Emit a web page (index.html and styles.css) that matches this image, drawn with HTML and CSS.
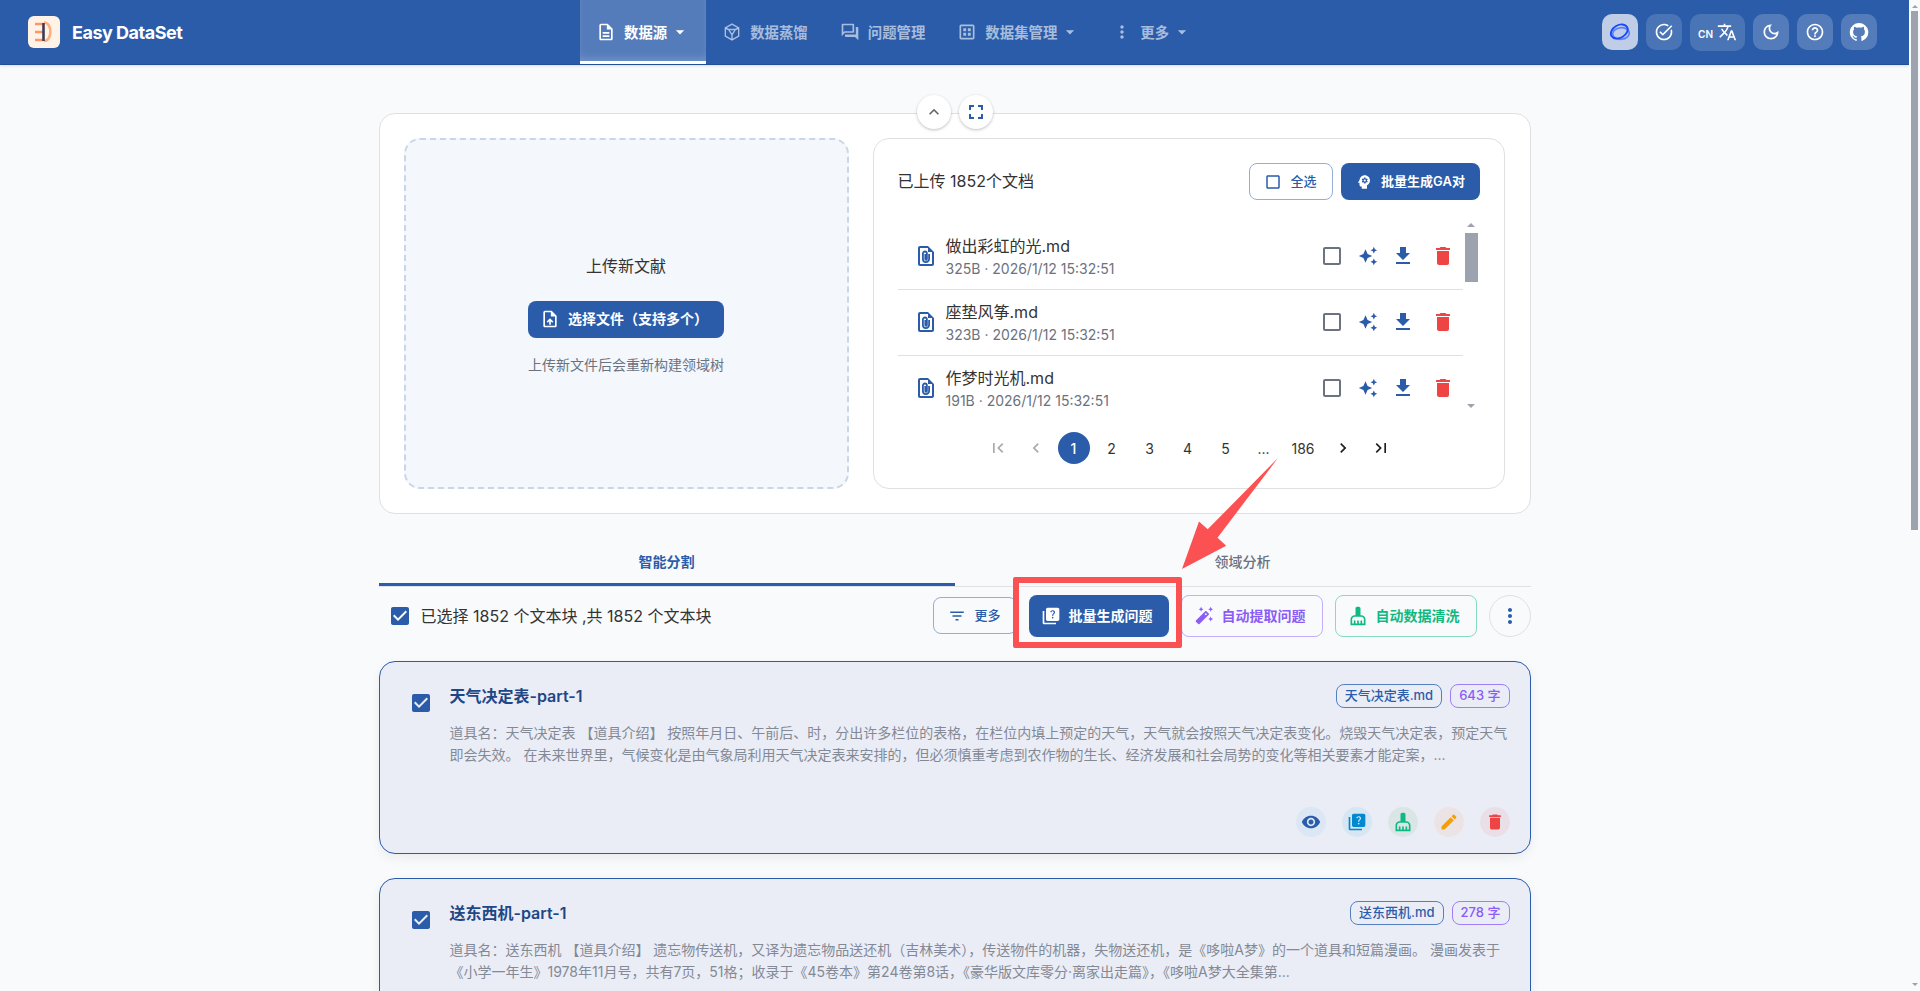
FILE: index.html
```html
<!DOCTYPE html>
<html lang="zh-CN">
<head>
    <meta charset="UTF-8">
    <meta name="viewport" content="width=device-width, initial-scale=1.0">
    <title>Easy DataSet</title>
    <link rel="stylesheet" href="styles.css">
</head>
<body>
    <!-- shared icons -->
    <svg class="sprite" aria-hidden="true">
        <symbol id="i-caret" viewBox="0 0 24 24"><path d="m7 10 5 5 5-5z"/></symbol>
        <symbol id="i-box" viewBox="0 0 24 24"><path d="M19 5v14H5V5h14m0-2H5c-1.1 0-2 .9-2 2v14c0 1.1.9 2 2 2h14c1.1 0 2-.9 2-2V5c0-1.1-.9-2-2-2z"/></symbol>
        <symbol id="i-checked" viewBox="0 0 24 24"><path d="M19 3H5c-1.11 0-2 .9-2 2v14c0 1.1.89 2 2 2h14c1.11 0 2-.9 2-2V5c0-1.1-.89-2-2-2zm-9 14l-5-5 1.41-1.41L10 14.17l7.59-7.59L19 8l-9 9z"/></symbol>
        <symbol id="i-file" viewBox="0 0 24 24"><path fill-rule="evenodd" d="M14 2H6c-1.1 0-2 .9-2 2v16c0 1.1.9 2 2 2h12c1.1 0 2-.9 2-2V8l-6-6zM6 4h8v4h4v12H6z"/><path fill="none" stroke="currentColor" stroke-width="1.8" d="M15.100 10v5a3.100 3.100 0 0 1-6.200 0V9.500a2 2 0 0 1 4 0v5.500a.8.8 0 0 1-1.600 0V10"/></symbol>
        <symbol id="i-stars" viewBox="0 0 24 24"><path d="m19 9 1.250-2.750L23 5l-2.750-1.250L19 1l-1.250 2.750L15 5l2.750 1.250L19 9zm-7.500.5L9 4 6.500 9.500 1 12l5.500 2.500L9 20l2.500-5.500L17 12l-5.500-2.500zM19 15l-1.250 2.750L15 19l2.750 1.250L19 23l1.250-2.750L23 19l-2.750-1.250L19 15z"/></symbol>
        <symbol id="i-download" viewBox="0 0 24 24"><path d="M19 9h-4V3H9v6H5l7 7 7-7zM5 18v2h14v-2H5z"/></symbol>
        <symbol id="i-trash" viewBox="0 0 24 24"><path d="M6 19c0 1.100.9 2 2 2h8c1.100 0 2-.9 2-2V7H6v12zM19 4h-3.500l-1-1h-5l-1 1H5v2h14V4z"/></symbol>
        <symbol id="i-quiz" viewBox="0 0 24 24"><path d="M4 6H2v14c0 1.100.9 2 2 2h14v-2H4V6z"/><path d="M20 2H8c-1.100 0-2 .9-2 2v12c0 1.100.9 2 2 2h12c1.100 0 2-.9 2-2V4c0-1.100-.9-2-2-2zm-5.990 13c-.59 0-1.050-.47-1.050-1.050 0-.59.47-1.040 1.050-1.040.59 0 1.040.45 1.040 1.040-.01.58-.45 1.050-1.040 1.050zm2.500-6.170c-.63.93-1.230 1.210-1.560 1.810-.13.24-.18.4-.18 1.180h-1.520c0-.41-.06-1.080.26-1.650.41-.73 1.180-1.160 1.630-1.800.48-.68.21-1.940-1.140-1.940-.88 0-1.320.67-1.500 1.230l-1.370-.57C11.510 5.960 12.520 5 13.990 5c1.230 0 2.080.56 2.510 1.260.37.6.58 1.730.01 2.570z"/></symbol>
        <symbol id="i-clean" viewBox="0 0 24 24"><path d="M16 11h-1V3c0-1.100-.9-2-2-2h-2c-1.100 0-2 .9-2 2v8H8c-2.760 0-5 2.240-5 5v7h18v-7c0-2.760-2.240-5-5-5zm3 10h-2v-3c0-.55-.45-1-1-1s-1 .45-1 1v3h-2v-3c0-.55-.45-1-1-1s-1 .45-1 1v3H9v-3c0-.55-.45-1-1-1s-1 .45-1 1v3H5v-5c0-1.650 1.350-3 3-3h8c1.650 0 3 1.350 3 3v5z"/></symbol>
        <symbol id="i-eye" viewBox="0 0 24 24"><path d="M12 4.500C7 4.500 2.730 7.610 1 12c1.730 4.390 6 7.500 11 7.500s9.270-3.110 11-7.500c-1.730-4.390-6-7.500-11-7.500zM12 17c-2.760 0-5-2.240-5-5s2.240-5 5-5 5 2.240 5 5-2.240 5-5 5zm0-8c-1.660 0-3 1.340-3 3s1.340 3 3 3 3-1.340 3-3-1.340-3-3-3z"/></symbol>
        <symbol id="i-edit" viewBox="0 0 24 24"><path d="M3 17.250V21h3.750L17.810 9.940l-3.750-3.750L3 17.250zM20.710 7.040c.39-.39.39-1.020 0-1.410l-2.340-2.340c-.39-.39-1.020-.39-1.410 0l-1.830 1.830 3.750 3.750 1.830-1.830z"/></symbol>
        <symbol id="i-dots" viewBox="0 0 24 24"><path d="M12 8c1.100 0 2-.9 2-2s-.9-2-2-2-2 .9-2 2 .9 2 2 2zm0 2c-1.100 0-2 .9-2 2s.9 2 2 2 2-.9 2-2-.9-2-2-2zm0 6c-1.100 0-2 .9-2 2s.9 2 2 2 2-.9 2-2-.9-2-2-2z"/></symbol>
    </svg>

    <div class="page">
        <header class="navbar">
            <div class="brand">
                <svg class="brand-logo" viewBox="0 0 32 32">
                    <rect width="32" height="32" rx="6" fill="#fff3e8"/>
                    <path d="M7 8h8M7 16h8M7 24h8" stroke="#ff9468" stroke-width="2.600" fill="none"/>
                    <path d="M16 6.500c8.500 0 8.500 18.500 0 18.500" stroke="#ffae7d" stroke-width="2.600" fill="none"/>
                    <path d="M15.500 7v18" stroke="#3d3b52" stroke-width="2.600"/>
                </svg>
                <span class="brand-name">Easy DataSet</span>
            </div>
            <nav class="nav">
                <a class="nav-item active">
                    <svg class="s20" viewBox="0 0 24 24"><path d="M8 16h8v2H8zm0-4h8v2H8zm6-10H6c-1.100 0-2 .9-2 2v16c0 1.100.89 2 1.990 2H18c1.100 0 2-.9 2-2V8l-6-6zm4 18H6V4h7v5h5v11z"/></svg>
                    <span>数据源</span><svg class="s20 caret"><use href="#i-caret"/></svg>
                </a>
                <a class="nav-item">
                    <svg class="s20 line" viewBox="0 0 24 24"><path d="M12 2.500 20 7v10l-8 4.500L4 17V7z"/><path d="M8 9h8l-4 6.500zM4.500 7.500 8 9m8 0 3.500-1.500M12 15.500v5.500"/></svg>
                    <span>数据蒸馏</span>
                </a>
                <a class="nav-item">
                    <svg class="s20" viewBox="0 0 24 24"><path d="M15 4v7H5.170L4 12.170V4h11m1-2H3c-.55 0-1 .45-1 1v14l4-4h10c.55 0 1-.45 1-1V3c0-.55-.45-1-1-1zm5 4h-2v9H6v2c0 .55.45 1 1 1h11l4 4V7c0-.55-.45-1-1-1z"/></svg>
                    <span>问题管理</span>
                </a>
                <a class="nav-item">
                    <svg class="s20" viewBox="0 0 24 24"><path d="M19 3H5c-1.100 0-2 .9-2 2v14c0 1.100.9 2 2 2h14c1.100 0 2-.9 2-2V5c0-1.100-.9-2-2-2zm0 16H5V5h14v14zM7.500 7.500h3.500v3.500H7.500zm5.500 0h3.500v3.500H13zm-5.500 5.500h3.500v3.500H7.500zm5.500 0h3.500v3.500H13z"/></svg>
                    <span>数据集管理</span><svg class="s20 caret"><use href="#i-caret"/></svg>
                </a>
                <a class="nav-item">
                    <svg class="s20"><use href="#i-dots"/></svg>
                    <span>更多</span><svg class="s20 caret"><use href="#i-caret"/></svg>
                </a>
            </nav>
            <div class="nav-tools">
                <button class="tool tool-model"><svg class="s20" viewBox="0 0 20 20"><ellipse cx="11" cy="11.500" rx="8.300" ry="5.800" fill="none" stroke="#5b80ff" stroke-width="1.700" transform="rotate(-5 11 11.500)"/><ellipse cx="9.300" cy="9.500" rx="9" ry="6.300" fill="none" stroke="#1747ff" stroke-width="1.900" transform="rotate(-30 9.300 9.500)"/></svg></button>
                <button class="tool tool-task"><svg class="s20" viewBox="0 0 24 24"><path d="M22 5.180 10.590 16.600l-4.240-4.240 1.410-1.410 2.830 2.830 10-10L22 5.180zm-2.210 5.040c.13.57.21 1.170.21 1.780 0 4.420-3.580 8-8 8s-8-3.580-8-8 3.580-8 8-8c1.580 0 3.040.46 4.280 1.250l1.440-1.440C16.100 2.670 14.130 2 12 2 6.480 2 2 6.480 2 12s4.480 10 10 10 10-4.480 10-10c0-1.190-.22-2.330-.6-3.390l-1.610 1.610z"/></svg></button>
                <button class="tool tool-lang"><span>CN</span><svg class="s20" viewBox="0 0 24 24"><path d="m12.870 15.070-2.540-2.510.03-.03c1.740-1.940 2.980-4.170 3.710-6.530H17V4h-7V2H8v2H1v1.990h11.170C11.500 7.920 10.440 9.750 9 11.350 8.070 10.320 7.300 9.190 6.690 8h-2c.73 1.630 1.730 3.170 2.980 4.560l-5.090 5.020L4 19l5-5 3.110 3.110.76-2.040zM18.500 10h-2L12 22h2l1.120-3h4.750L21 22h2l-4.500-12zm-2.620 7 1.620-4.330L19.120 17h-3.240z"/></svg></button>
                <button class="tool"><svg class="s20" viewBox="0 0 24 24"><path d="M9.370 5.510c-.18.64-.27 1.310-.27 1.990 0 4.080 3.320 7.400 7.400 7.400.68 0 1.350-.09 1.990-.27C17.450 17.190 14.930 19 12 19c-3.860 0-7-3.140-7-7 0-2.930 1.810-5.450 4.370-6.490zM12 3c-4.970 0-9 4.030-9 9s4.030 9 9 9 9-4.030 9-9c0-.46-.04-.92-.1-1.360-.98 1.370-2.580 2.260-4.400 2.260-2.980 0-5.400-2.420-5.400-5.400 0-1.810.89-3.420 2.260-4.400-.44-.06-.9-.1-1.360-.1z"/></svg></button>
                <button class="tool"><svg class="s20" viewBox="0 0 24 24"><path d="M11 18h2v-2h-2v2zm1-16C6.480 2 2 6.480 2 12s4.480 10 10 10 10-4.480 10-10S17.520 2 12 2zm0 18c-4.410 0-8-3.590-8-8s3.590-8 8-8 8 3.590 8 8-3.590 8-8 8zm0-14c-2.210 0-4 1.790-4 4h2c0-1.100.9-2 2-2s2 .9 2 2c0 2-3 1.750-3 5h2c0-2.250 3-2.500 3-5 0-2.210-1.790-4-4-4z"/></svg></button>
                <button class="tool"><svg class="s20" viewBox="0 0 24 24"><path d="M12 1.270a11 11 0 0 0-3.480 21.460c.55.09.73-.28.73-.55v-1.840c-3.030.64-3.670-1.460-3.670-1.460-.55-1.290-1.280-1.650-1.280-1.650-.92-.65.1-.65.1-.65 1.100 0 1.730 1.100 1.730 1.100.92 1.650 2.570 1.200 3.210.92a2 2 0 0 1 .64-1.470c-2.470-.27-5.040-1.190-5.040-5.500 0-1.100.46-2.100 1.200-2.840a3.760 3.760 0 0 1 0-2.930s.91-.28 3.110 1.100c1.800-.49 3.700-.49 5.500 0 2.100-1.380 3.020-1.100 3.020-1.100a3.760 3.760 0 0 1 .1 2.930c.83.74 1.200 1.740 1.200 2.940 0 4.210-2.570 5.130-5.040 5.400.45.37.82.92.82 2.020v3.030c0 .27.1.64.73.55A11 11 0 0 0 12 1.270"/></svg></button>
            </div>
        </header>

        <main class="container">
            <section class="upload-card">
                <div class="toggles">
                    <button class="toggle"><svg class="s20" viewBox="0 0 24 24"><path d="m12 8-6 6 1.410 1.410L12 10.830l4.590 4.580L18 14z"/></svg></button>
                    <button class="toggle toggle-full"><svg class="s24" viewBox="0 0 24 24"><path d="M7 14H5v5h5v-2H7v-3zm-2-4h2V7h3V5H5v5zm12 7h-3v2h5v-5h-2v3zM14 5v2h3v3h2V5h-5z"/></svg></button>
                </div>
                <div class="dropzone">
                    <p class="dropzone-title">上传新文献</p>
                    <button class="btn btn-primary btn-upload"><svg class="s20" viewBox="0 0 24 24"><path d="M14 2H6c-1.100 0-1.990.9-1.990 2L4 20c0 1.100.89 2 1.990 2H18c1.100 0 2-.9 2-2V8l-6-6zm4 18H6V4h7v5h5v11zM8 15.010l1.410 1.410L11 14.840V19h2v-4.160l1.590 1.590L16 15.010 12.010 11z"/></svg><span>选择文件（支持多个）</span></button>
                    <p class="hint">上传新文件后会重新构建领域树</p>
                </div>
                <div class="files">
                    <div class="files-head">
                        <p class="files-title">已上传 1852个文档</p>
                        <button class="btn btn-outline btn-small btn-all"><svg class="s18"><use href="#i-box"/></svg><span>全选</span></button>
                        <button class="btn btn-primary btn-small btn-ga"><svg class="s18" viewBox="0 0 24 24"><path d="M13 8.570c-.79 0-1.430.64-1.430 1.430s.64 1.430 1.430 1.430 1.430-.64 1.430-1.430-.64-1.430-1.430-1.430z"/><path d="M13 3C9.250 3 6.200 5.940 6.020 9.640L4.100 12.200c-.25.33-.01.8.4.8H6v3c0 1.100.9 2 2 2h1v3h7v-4.680c2.360-1.120 4-3.530 4-6.320 0-3.870-3.130-7-7-7zm3 7c0 .13-.01.26-.02.39l.83.66c.08.06.1.16.05.25l-.8 1.390c-.05.09-.16.12-.24.09l-.99-.4c-.21.16-.43.29-.67.39L14 13.830c-.01.1-.1.170-.2.170h-1.600c-.1 0-.18-.07-.2-.170l-.15-1.060c-.25-.1-.47-.23-.68-.39l-.99.4c-.09.03-.2 0-.25-.09l-.8-1.390c-.05-.08-.03-.19.05-.25l.84-.66c-.01-.13-.02-.26-.02-.39s.02-.27.04-.39l-.85-.66c-.08-.06-.1-.16-.05-.26l.8-1.380c.05-.09.15-.12.24-.09l1 .4c.2-.15.43-.29.67-.39L12 6.170c.02-.1.100-.170.200-.170h1.600c.1 0 .18.07.2.170l.15 1.060c.24.1.46.23.67.39l1-.4c.09-.03.2 0 .24.09l.8 1.380c.05.09.03.2-.05.26l-.85.66c.03.12.04.25.04.39z"/></svg><span>批量生成GA对</span></button>
                    </div>
                    <div class="files-scroll">
                        <ul class="file-list">
                            <li class="file">
                                <svg class="s24 blue"><use href="#i-file"/></svg>
                                <div class="file-text"><p>做出彩虹的光.md</p><small>325B · 2026/1/12 15:32:51</small></div>
                                <svg class="s24 grey"><use href="#i-box"/></svg><svg class="s20 blue stars"><use href="#i-stars"/></svg><svg class="s24 blue down"><use href="#i-download"/></svg><svg class="s24 red"><use href="#i-trash"/></svg>
                            </li>
                            <li class="file">
                                <svg class="s24 blue"><use href="#i-file"/></svg>
                                <div class="file-text"><p>座垫风筝.md</p><small>323B · 2026/1/12 15:32:51</small></div>
                                <svg class="s24 grey"><use href="#i-box"/></svg><svg class="s20 blue stars"><use href="#i-stars"/></svg><svg class="s24 blue down"><use href="#i-download"/></svg><svg class="s24 red"><use href="#i-trash"/></svg>
                            </li>
                            <li class="file">
                                <svg class="s24 blue"><use href="#i-file"/></svg>
                                <div class="file-text"><p>作梦时光机.md</p><small>191B · 2026/1/12 15:32:51</small></div>
                                <svg class="s24 grey"><use href="#i-box"/></svg><svg class="s20 blue stars"><use href="#i-stars"/></svg><svg class="s24 blue down"><use href="#i-download"/></svg><svg class="s24 red"><use href="#i-trash"/></svg>
                            </li>
                        </ul>
                        <div class="list-bar"><i class="up"></i><b></b><i class="down-arrow"></i></div>
                    </div>
                    <div class="pager">
                        <span class="off"><svg class="s20" viewBox="0 0 24 24"><path d="M18.410 16.590 13.820 12l4.590-4.590L17 6l-6 6 6 6zM6 6h2v12H6z"/></svg></span>
                        <span class="off"><svg class="s20" viewBox="0 0 24 24"><path d="M15.410 7.410 14 6l-6 6 6 6 1.410-1.410L10.830 12z"/></svg></span>
                        <span class="current">1</span><span>2</span><span>3</span><span>4</span><span>5</span><span>...</span><span class="wide">186</span>
                        <span class="next"><svg class="s20" viewBox="0 0 24 24"><path d="M10 6 8.590 7.410 13.170 12l-4.580 4.590L10 18l6-6z"/></svg></span>
                        <span class="next"><svg class="s20" viewBox="0 0 24 24"><path d="M5.590 7.410 10.180 12l-4.590 4.590L7 18l6-6-6-6zM16 6h2v12h-2z"/></svg></span>
                    </div>
                </div>
            </section>

            <div class="tabs">
                <a class="tab active">智能分割</a>
                <a class="tab">领域分析</a>
            </div>

            <div class="toolbar">
                <svg class="s24 blue"><use href="#i-checked"/></svg>
                <p class="toolbar-text">已选择 1852 个文本块 ,共 1852 个文本块</p>
                <button class="btn btn-outline btn-small btn-more"><svg class="s18" viewBox="0 0 24 24"><path d="M10 18h4v-2h-4v2zM3 6v2h18V6H3zm3 7h12v-2H6v2z"/></svg><span>更多</span></button>
                <div class="target">
                    <button class="btn btn-primary btn-action"><svg class="s20"><use href="#i-quiz"/></svg><span>批量生成问题</span></button>
                    <!-- callout over the batch button -->
                    <div class="callout"></div>
                    <svg class="arrow" viewBox="0 0 96 111"><path d="M96 0 35.500 79.700 44.200 87.700 0 111 17 63.500 25.700 71.300z"/></svg>
                </div>
                <button class="btn btn-action btn-purple"><svg class="s20" viewBox="0 0 24 24"><path d="m20 7 .94-2.060L23 4l-2.060-.94L20 1l-.94 2.060L17 4l2.060.94zM8.500 7l.94-2.060L11.500 4l-2.060-.94L8.500 1l-.94 2.060L5.500 4l2.060.94zM20 12.500l-.94 2.060-2.060.94 2.060.94.94 2.060.94-2.060L23 15.500l-2.060-.94zM17.710 9.120l-2.830-2.830c-.19-.19-.45-.29-.7-.29-.26 0-.51.1-.71.290L2.290 17.460c-.39.39-.39 1.020 0 1.410l2.830 2.830c.2.2.45.3.71.3s.51-.1.71-.29l11.170-11.170c.39-.39.39-1.030 0-1.420zM14.210 11.210l-1.420-1.420 1.380-1.380 1.420 1.420z"/></svg><span>自动提取问题</span></button>
                <button class="btn btn-action btn-green"><svg class="s20"><use href="#i-clean"/></svg><span>自动数据清洗</span></button>
                <button class="btn-round"><svg class="s24"><use href="#i-dots"/></svg></button>
            </div>

            <article class="chunk">
                <svg class="s24 blue chunk-check"><use href="#i-checked"/></svg>
                <div class="chunk-body">
                    <div class="chunk-head">
                        <h3>天气决定表-part-1</h3>
                        <span class="chip">天气决定表.md</span>
                        <span class="chip chip-purple">643 字</span>
                    </div>
                    <p class="chunk-text">道具名：天气决定表 【道具介绍】 按照年月日、午前后、时，分出许多栏位的表格，在栏位内填上预定的天气，天气就会按照天气决定表变化。烧毁天气决定表，预定天气<br>即会失效。 在未来世界里，气候变化是由气象局利用天气决定表来安排的，但必须慎重考虑到农作物的生长、经济发展和社会局势的变化等相关要素才能定案，...</p>
                    <div class="chunk-actions">
                        <button class="act act-view"><svg class="s20"><use href="#i-eye"/></svg></button>
                        <button class="act act-quiz"><svg class="s20"><use href="#i-quiz"/></svg></button>
                        <button class="act act-clean"><svg class="s20"><use href="#i-clean"/></svg></button>
                        <button class="act act-edit"><svg class="s20"><use href="#i-edit"/></svg></button>
                        <button class="act act-delete"><svg class="s20"><use href="#i-trash"/></svg></button>
                    </div>
                </div>
            </article>

            <article class="chunk">
                <svg class="s24 blue chunk-check"><use href="#i-checked"/></svg>
                <div class="chunk-body">
                    <div class="chunk-head">
                        <h3>送东西机-part-1</h3>
                        <span class="chip">送东西机.md</span>
                        <span class="chip chip-purple">278 字</span>
                    </div>
                    <p class="chunk-text">道具名：送东西机 【道具介绍】 遗忘物传送机，又译为遗忘物品送还机（吉林美术），传送物件的机器，失物送还机，是《哆啦A梦》的一个道具和短篇漫画。 漫画发表于<br>《小学一年生》1978年11月号，共有7页，51格；收录于《45卷本》第24卷第8话，《豪华版文库零分·离家出走篇》，《哆啦A梦大全集第...</p>
                </div>
            </article>
        </main>
    </div>

    <div class="page-bar"><i class="up"></i><b></b><i class="down-arrow"></i></div>
</body>
</html>
```

FILE: styles.css
```css
* {
    box-sizing: border-box;
}

body {
    display: flex;
    height: 991px;
    margin: 0;
    overflow: hidden;
    background-color: #f8fafc;
    color: #333;
    font-family: Inter, "Noto Sans CJK SC", sans-serif;
    font-size: 14px;
}

p, h3, ul {
    margin: 0;
    padding: 0;
}

button {
    padding: 0;
    border: none;
    background: none;
    font-family: inherit;
    cursor: pointer;
}

svg {
    flex: none;
    fill: currentColor;
}

.sprite {
    position: absolute;
    width: 0;
    height: 0;
}

.s18 { width: 18px; height: 18px; }
.s20 { width: 20px; height: 20px; }
.s24 { width: 24px; height: 24px; }

.line {
    fill: none;
    stroke: currentColor;
    stroke-width: 1.7;
}

.blue { color: #2a5caa; }
.grey { color: #6b7280; }
.red { color: #ef4444; }

.page {
    flex: 1;
    min-width: 0;
    overflow: hidden;
}

/* navbar */
.navbar {
    display: grid;
    grid-template-columns: 552px auto 1fr;
    height: 65px;
    padding: 0 32px 0 28px;
    background-color: #2a5caa;
    border-bottom: 1px solid #20509a;
    box-shadow: 0 1px 3px rgba(0, 0, 0, 0.12);
    color: #fff;
}

.brand {
    display: flex;
    align-items: center;
    gap: 12px;
}

.brand-logo {
    width: 32px;
    height: 32px;
}

.brand-name {
    font-size: 18px;
    font-weight: 700;
    letter-spacing: -0.5px;
}

.nav {
    display: flex;
}

.nav-item {
    display: flex;
    align-items: center;
    padding: 0 16px;
    color: rgba(255, 255, 255, 0.6);
    font-size: 14.4px;
    font-weight: 600;
}

.nav-item span {
    margin-left: 8px;
    padding-bottom: 2px;
}

.nav-item .caret {
    margin-left: 3px;
}

.nav-item.active {
    background-color: rgba(255, 255, 255, 0.2);
    box-shadow: inset 0 -3px 0 #fff, inset 0 -8px 8px -3px rgba(255, 255, 255, 0.2);
    color: #fff;
    font-weight: 700;
}

.nav-tools {
    display: flex;
    align-items: center;
    justify-content: flex-end;
    gap: 8px;
}

.tool {
    display: flex;
    align-items: center;
    justify-content: center;
    width: 36px;
    height: 36px;
    border-radius: 10px;
    background-color: rgba(255, 255, 255, 0.2);
    color: #fff;
}

.tool-model { background-color: rgba(255, 255, 255, 0.7); }
.tool-task { background-color: rgba(255, 255, 255, 0.15); }

.tool-lang {
    gap: 4px;
    width: 55px;
    height: 37px;
    background-color: rgba(255, 255, 255, 0.15);
    font-size: 10px;
    font-weight: 600;
}

.tool-lang span {
    padding-top: 4px;
}

.container {
    width: 1152px;
    margin: 48px auto 0;
}

/* upload */
.upload-card {
    position: relative;
    display: grid;
    grid-template-columns: 445px 1fr;
    gap: 24px;
    height: 401px;
    padding: 24px 25px 24px 24px;
    background-color: #fff;
    border: 1px solid #e0e0e0;
    border-radius: 16px;
}

.toggles {
    position: absolute;
    top: -19px;
    left: 0;
    right: 0;
    display: flex;
    justify-content: center;
    gap: 8px;
}

.toggle {
    display: flex;
    align-items: center;
    justify-content: center;
    width: 34px;
    height: 34px;
    border-radius: 50%;
    background-color: #fff;
    box-shadow: 0 1px 3px rgba(0, 0, 0, 0.25);
    color: #666;
}

.toggle-full {
    color: #2a5caa;
}

.dropzone {
    display: flex;
    flex-direction: column;
    align-items: center;
    justify-content: center;
    padding-top: 2px;
    background-color: #f4f7fc;
    border: 2px dashed #c9d6ea;
    border-radius: 16px;
}

.dropzone-title {
    margin-bottom: 23px;
    font-size: 16px;
    line-height: 24px;
}

.hint {
    margin-top: 16px;
    color: #6b7280;
    line-height: 22px;
}

.btn {
    display: flex;
    align-items: center;
    justify-content: center;
    gap: 8px;
    height: 37px;
    border-radius: 8px;
    font-size: 14px;
    font-weight: 600;
    white-space: nowrap;
}

.btn span {
    padding-bottom: 2px;
}

.btn-primary {
    background-color: #2a5caa;
    color: #fff;
}

.btn-outline {
    border: 1px solid #94aed5;
    color: #2a5caa;
    font-weight: 500;
}

.btn-small {
    font-size: 13px;
}

.btn-upload { width: 196px; padding-right: 4px; }
.btn-all { width: 84px; }
.btn-ga { width: 139px; margin-left: 8px; }

.files {
    display: flex;
    flex-direction: column;
    padding: 24px;
    border: 1px solid #e0e0e0;
    border-radius: 16px;
}

.files-head {
    display: flex;
    align-items: center;
    margin-bottom: 19px;
}

.files-title {
    flex: 1;
    padding-bottom: 3px;
    font-size: 16px;
}

.files-scroll {
    display: flex;
    height: 195px;
    overflow: hidden;
}

.file-list {
    flex: 1;
    padding-top: 5px;
    list-style: none;
}

.file {
    display: flex;
    align-items: center;
    height: 66px;
    padding: 0 8px 2px 16px;
    border-bottom: 1px solid #e0e0e0;
}

.file:last-child {
    border-bottom: none;
}

.file-text {
    flex: 1;
    margin-left: 8px;
    padding-top: 1px;
}

.file-text p {
    font-size: 16px;
    line-height: 24px;
}

.file-text small {
    display: block;
    color: #6b7280;
    font-size: 14px;
    line-height: 21px;
}

.stars { margin: 0 13px 0 14px; }
.down { margin-right: 16px; }

.list-bar,
.page-bar {
    display: flex;
    flex-direction: column;
    align-items: center;
    width: 17px;
}

.list-bar { padding: 4px 0 6px; }

.list-bar b,
.page-bar b {
    width: 13px;
    height: 49px;
    margin-top: 6px;
    background-color: #9ca3af;
}

.up,
.down-arrow {
    border: solid transparent;
    border-width: 0 4px 4px;
    border-bottom-color: #9ca3af;
}

.down-arrow {
    margin-top: auto;
    border-width: 4px 4px 0;
    border-top-color: #9ca3af;
}

.page-bar {
    width: 11px;
    padding: 5px 0;
}

.page-bar b {
    width: 7px;
    height: 519px;
    margin-top: 3px;
}

.page-bar i {
    border-left-width: 3px;
    border-right-width: 3px;
}

.page-bar .up { border-bottom-width: 3px; }
.page-bar .down-arrow { border-top-width: 3px; }

.pager {
    display: flex;
    justify-content: center;
    gap: 6px;
    margin-top: 18px;
    padding-left: 1px;
}

.pager span {
    display: flex;
    align-items: center;
    justify-content: center;
    width: 32px;
    height: 32px;
    border-radius: 50%;
}

.pager .wide { width: 35px; }
.pager .off { color: #aaa; }
.pager .next { color: #1f1f1f; }

.pager .current {
    background-color: #2a5caa;
    color: #fff;
    font-weight: 500;
}

/* tabs */
.tabs {
    display: flex;
    height: 49px;
    margin-top: 24px;
    border-bottom: 1px solid #dfe1e5;
}

.tab {
    display: flex;
    flex: 1;
    align-items: center;
    justify-content: center;
    padding-bottom: 3px;
    color: #6b7280;
    font-weight: 500;
}

.tab.active {
    box-shadow: inset 0 -3px 0 #2a5caa;
    color: #2a5caa;
    font-weight: 600;
}

/* toolbar */
.toolbar {
    display: flex;
    align-items: center;
    height: 42px;
    margin: 8px 0 24px;
    padding-left: 9px;
}

.toolbar-text {
    flex: 1;
    margin-left: 9px;
    padding-bottom: 2px;
    font-size: 16px;
}

.btn-more {
    width: 84px;
    margin-bottom: 1px;
}

.btn-action {
    width: 142px;
    height: 42px;
    margin-left: 12px;
    padding-right: 4px;
}

.target {
    position: relative;
}

.target .btn-action {
    width: 140px;
}

.callout {
    position: absolute;
    top: -18px;
    left: -4px;
    width: 169px;
    height: 71px;
    border: 6px solid #fc5152;
    border-radius: 2px;
}

.arrow {
    position: absolute;
    top: -137px;
    left: 165px;
    width: 96px;
    height: 111px;
    fill: #fc5152;
}

.btn-purple {
    border: 1px solid #c4adfa;
    color: #8b5cf6;
}

.btn-green {
    border: 1px solid #87dbc0;
    color: #10b981;
}

.btn-round {
    display: flex;
    align-items: center;
    justify-content: center;
    width: 42px;
    height: 42px;
    margin-left: 12px;
    border: 1px solid #dfe1e5;
    border-radius: 50%;
    color: #2a5caa;
}

/* chunks */
.chunk {
    display: flex;
    height: 193px;
    margin-bottom: 24px;
    padding: 22px 20px 16px 29px;
    background-color: #eaedf6;
    border: 1px solid #2a5caa;
    border-radius: 16px;
    box-shadow: 0 4px 12px rgba(0, 0, 0, 0.06);
}

.chunk-check {
    margin-top: 7px;
}

.chunk-body {
    display: flex;
    flex: 1;
    flex-direction: column;
    margin-left: 17px;
}

.chunk-head {
    display: flex;
    align-items: center;
    gap: 8px;
    height: 24px;
}

.chunk-head h3 {
    flex: 1;
    padding-bottom: 2px;
    color: #1e4785;
    font-size: 16px;
    font-weight: 600;
}

.chip {
    display: flex;
    align-items: center;
    height: 24px;
    padding: 0 8px 3px;
    border: 1px solid #5580c0;
    border-radius: 8px;
    color: #2a5caa;
    font-size: 13px;
    font-weight: 500;
}

.chip-purple {
    border-color: #a27df8;
    color: #8b5cf6;
}

.chunk-text {
    margin-top: 14px;
    color: #838995;
    line-height: 22px;
    white-space: nowrap;
}

.chunk-actions {
    display: flex;
    justify-content: flex-end;
    gap: 16px;
    margin-top: auto;
}

.act {
    display: flex;
    align-items: center;
    justify-content: center;
    width: 30px;
    height: 30px;
    border-radius: 50%;
}

.act-view { background-color: #dbe7f5; color: #2a5caa; }
.act-quiz { background-color: #d6e6f2; color: #0288d1; }
.act-clean { background-color: #dae5e6; color: #10b981; }
.act-edit { background-color: #ece4e4; color: #f59e0b; }
.act-delete { background-color: #ebdfe7; color: #ef4444; }
```
